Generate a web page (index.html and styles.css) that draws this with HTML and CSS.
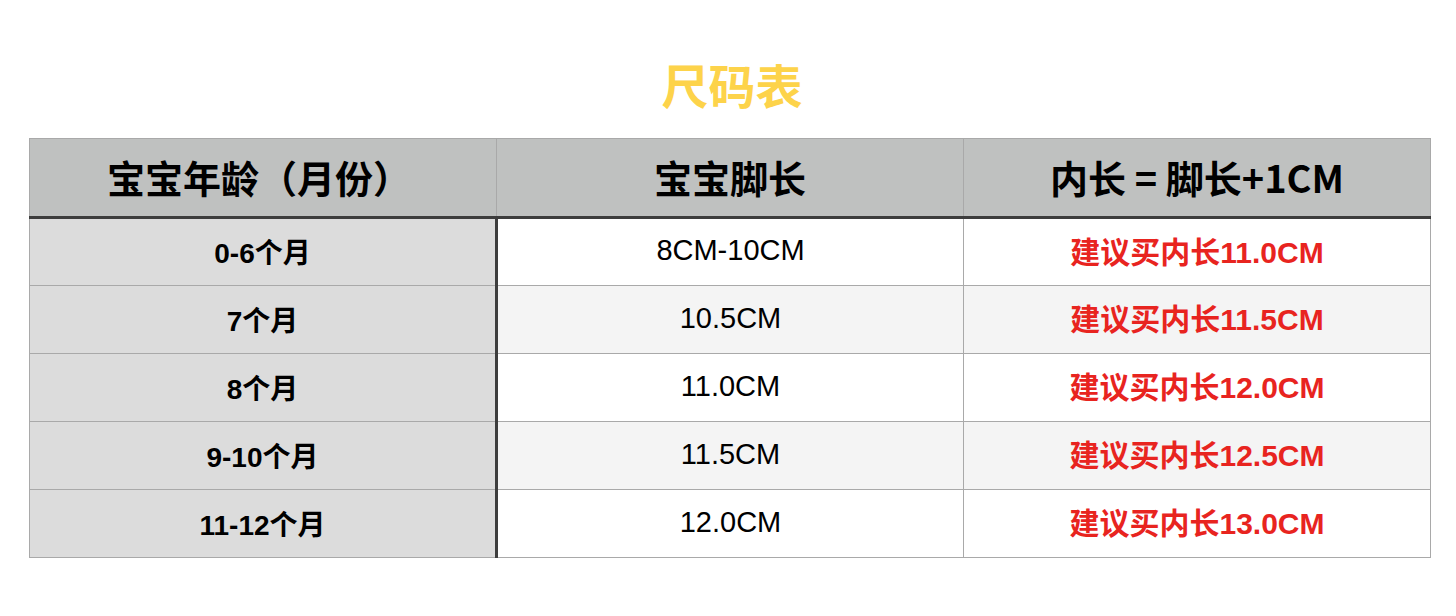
FILE: index.html
```html
<!DOCTYPE html>
<html lang="zh">
<head>
<meta charset="utf-8">
<title>尺码表</title>
<link rel="stylesheet" href="styles.css">
</head>
<body>
<div class="page">
  <h1 class="title">尺码表</h1>
  <table class="size-table">
    <thead>
      <tr>
        <th>宝宝年龄（月份）</th>
        <th>宝宝脚长</th>
        <th>内长 = 脚长+1CM</th>
      </tr>
    </thead>
    <tbody>
      <tr><td class="age">0-6个月</td><td class="foot">8CM-10CM</td><td class="rec">建议买内长11.0CM</td></tr>
      <tr class="alt"><td class="age">7个月</td><td class="foot">10.5CM</td><td class="rec">建议买内长11.5CM</td></tr>
      <tr><td class="age">8个月</td><td class="foot">11.0CM</td><td class="rec">建议买内长12.0CM</td></tr>
      <tr class="alt"><td class="age">9-10个月</td><td class="foot">11.5CM</td><td class="rec">建议买内长12.5CM</td></tr>
      <tr><td class="age">11-12个月</td><td class="foot">12.0CM</td><td class="rec">建议买内长13.0CM</td></tr>
    </tbody>
  </table>
</div>
</body>
</html>
```

FILE: styles.css
```css
html, body {
  margin: 0;
  padding: 0;
  background: #ffffff;
}

body {
  font-family: "Liberation Sans", "Noto Sans CJK SC", sans-serif;
  color: #000;
}

.page {
  padding: 54px 25px 0 29px;
}

.title {
  margin: 0 0 24px 0;
  text-align: center;
  font-family: "Noto Sans CJK SC", sans-serif;
  font-weight: 700;
  font-size: 47px;
  line-height: 60px;
  color: #fdd34a;
  padding-left: 4px;
}

.size-table {
  width: 100%;
  border-collapse: collapse;
  table-layout: fixed;
  border: 1px solid #a9a9a9;
}

.size-table th,
.size-table td {
  border: 1px solid #a9a9a9;
  text-align: center;
  vertical-align: middle;
  padding: 0;
}

.size-table thead tr {
  height: 79px;
}

.size-table th {
  background: #bfc1c0;
  font-family: "Noto Sans CJK SC", sans-serif;
  font-weight: 700;
  font-size: 38px;
  border-bottom: 3px solid #3d3d3d;
  padding-bottom: 2px;
}

.size-table th:first-child {
  padding-right: 8px;
}

.size-table tbody tr {
  height: 68px;
}

.size-table td {
  font-size: 29px;
  padding-bottom: 3px;
}

.size-table td.age {
  background: #dcdcdc;
  font-weight: 700;
  font-size: 28px;
  border-right: 3px solid #3d3d3d;
  padding-bottom: 2px;
}

.size-table td.foot {
  background: #ffffff;
}

.size-table td.rec {
  background: #ffffff;
  color: #e8241f;
  font-weight: 700;
  font-size: 30px;
  padding-bottom: 5px;
}

.size-table tr.alt td.foot,
.size-table tr.alt td.rec {
  background: #f4f4f4;
}
```
